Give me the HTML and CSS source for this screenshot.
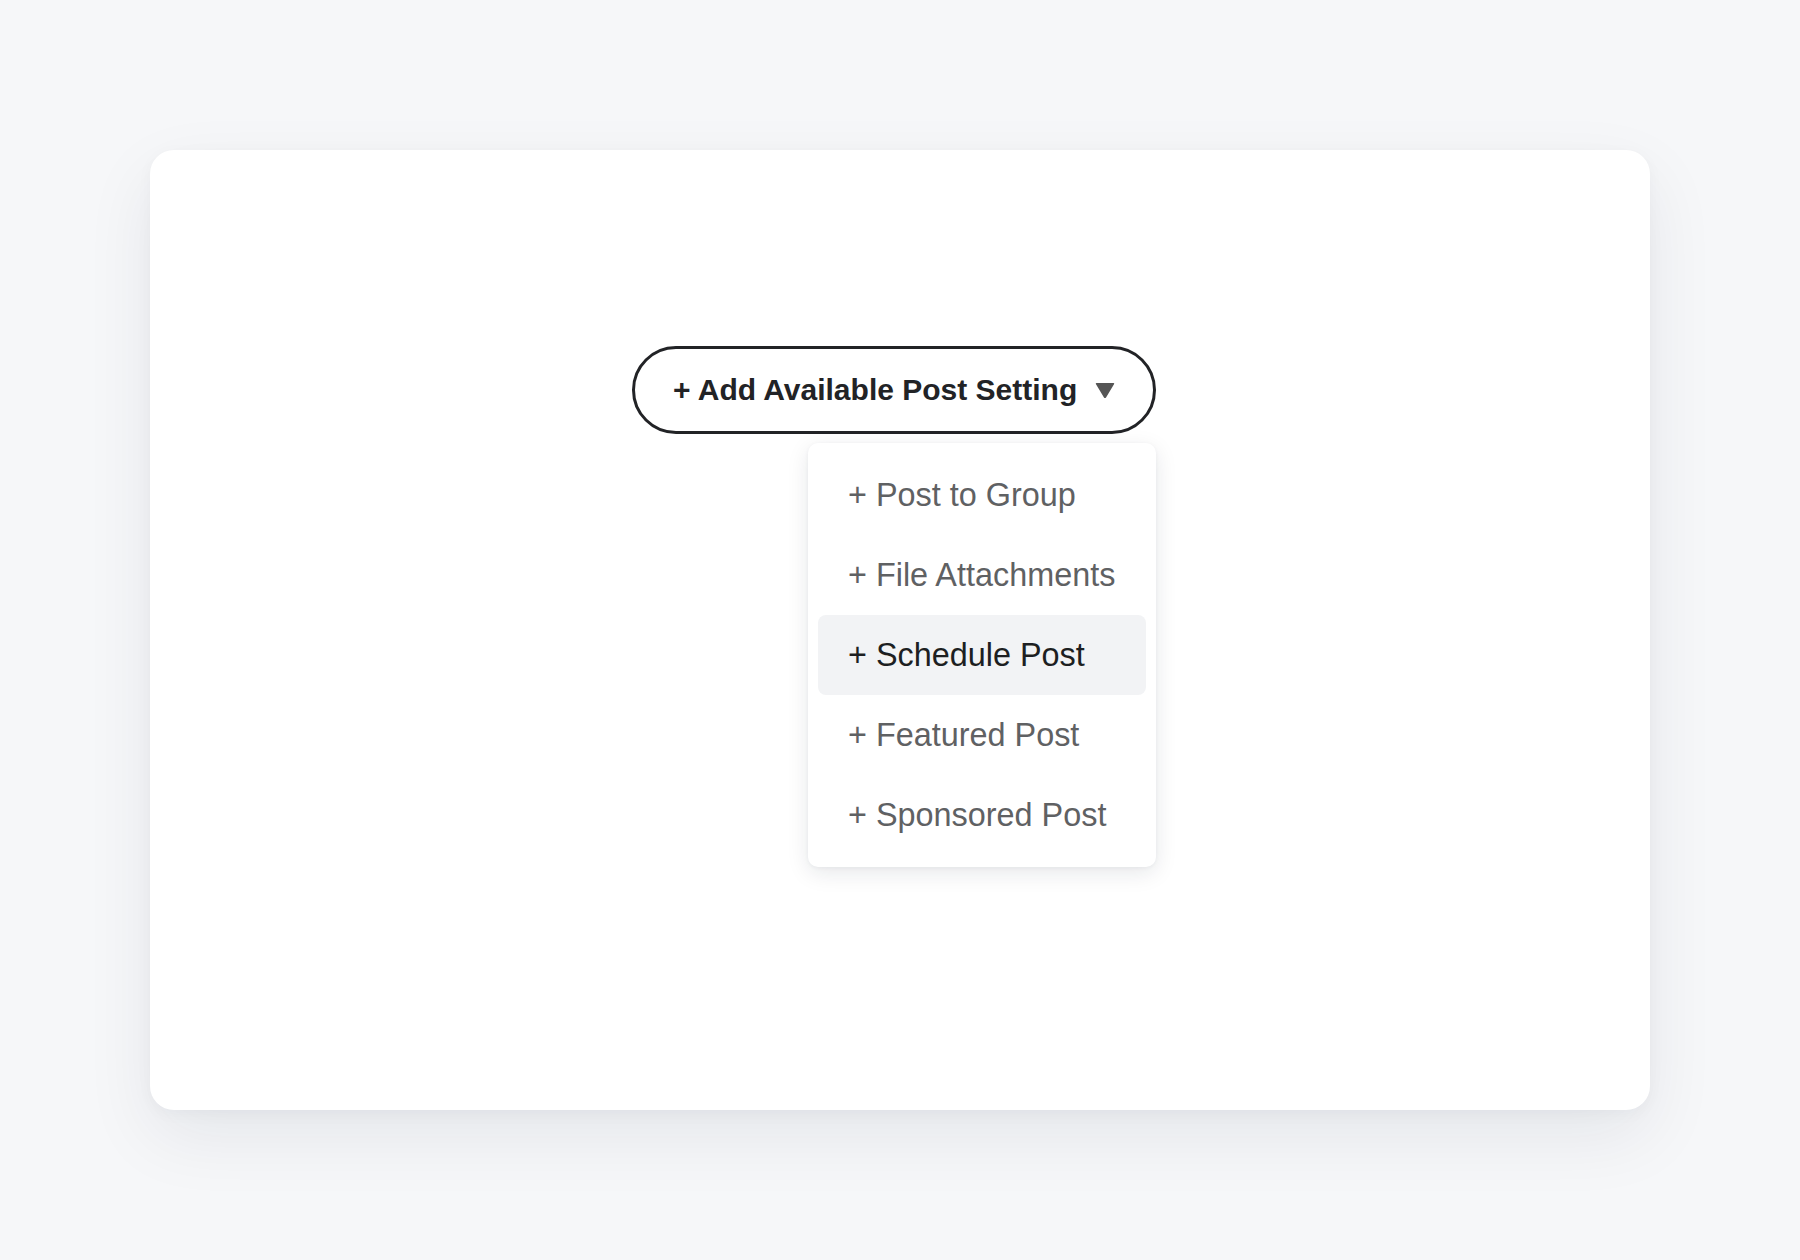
FILE: index.html
```html
<!DOCTYPE html>
<html lang="en">
<head>
<meta charset="utf-8">
<title>Add Available Post Setting</title>
<link rel="stylesheet" href="styles.css">
</head>
<body>
<main class="card">
  <div class="row">
    <div class="dropdown">
      <button class="trigger" type="button">
        <span class="trigger-label">+ Add Available Post Setting</span>
        <svg class="caret" width="20" height="17" viewBox="0 0 20 17" aria-hidden="true">
          <path d="M1.6 1 H18.4 Q19.8 1 19 2.3 L11.2 15.2 Q10 17 8.8 15.2 L1 2.3 Q0.2 1 1.6 1 Z" fill="#555555"/>
        </svg>
      </button>
      <ul class="menu">
        <li class="item">+ Post to Group</li>
        <li class="item">+ File Attachments</li>
        <li class="item active">+ Schedule Post</li>
        <li class="item">+ Featured Post</li>
        <li class="item">+ Sponsored Post</li>
      </ul>
    </div>
  </div>
</main>
</body>
</html>
```

FILE: styles.css
```css
* { box-sizing: border-box; }

html, body {
  margin: 0;
  padding: 0;
}

body {
  background: #f6f7f9;
  font-family: "Liberation Sans", Arial, Helvetica, sans-serif;
  padding: 150px;
  min-height: 1260px;
}

.card {
  width: 1500px;
  height: 960px;
  background: #ffffff;
  border-radius: 24px;
  box-shadow: 0 26px 70px rgba(20, 30, 50, 0.075), 0 4px 16px rgba(20, 30, 50, 0.035);
  padding-top: 196px;
}

.row {
  display: flex;
  justify-content: center;
  padding-right: 12px;
}

.dropdown {
  position: relative;
}

.trigger {
  display: flex;
  align-items: center;
  gap: 18px;
  height: 88px;
  width: 524px;
  padding: 0 36px 0 38px;
  border: 3.5px solid #222326;
  border-radius: 44px;
  background: #ffffff;
  font-family: inherit;
  font-size: 30px;
  font-weight: 700;
  color: #222326;
  cursor: pointer;
}

.trigger-label {
  white-space: nowrap;
}

.caret {
  display: block;
  flex: none;
  margin-top: 1px;
}

.menu {
  position: absolute;
  right: 0;
  top: calc(100% + 9px);
  width: 348px;
  margin: 0;
  padding: 12px 10px;
  list-style: none;
  background: #ffffff;
  border-radius: 10px;
  box-shadow: 0 6px 22px rgba(20, 30, 50, 0.1), 0 1px 4px rgba(20, 30, 50, 0.05);
}

.item {
  display: flex;
  align-items: center;
  height: 80px;
  padding-left: 30px;
  font-size: 32.4px;
  color: #5f6163;
  border-radius: 8px;
  white-space: nowrap;
}

.item.active {
  background: #f2f3f5;
  color: #1d1f22;
}
```
